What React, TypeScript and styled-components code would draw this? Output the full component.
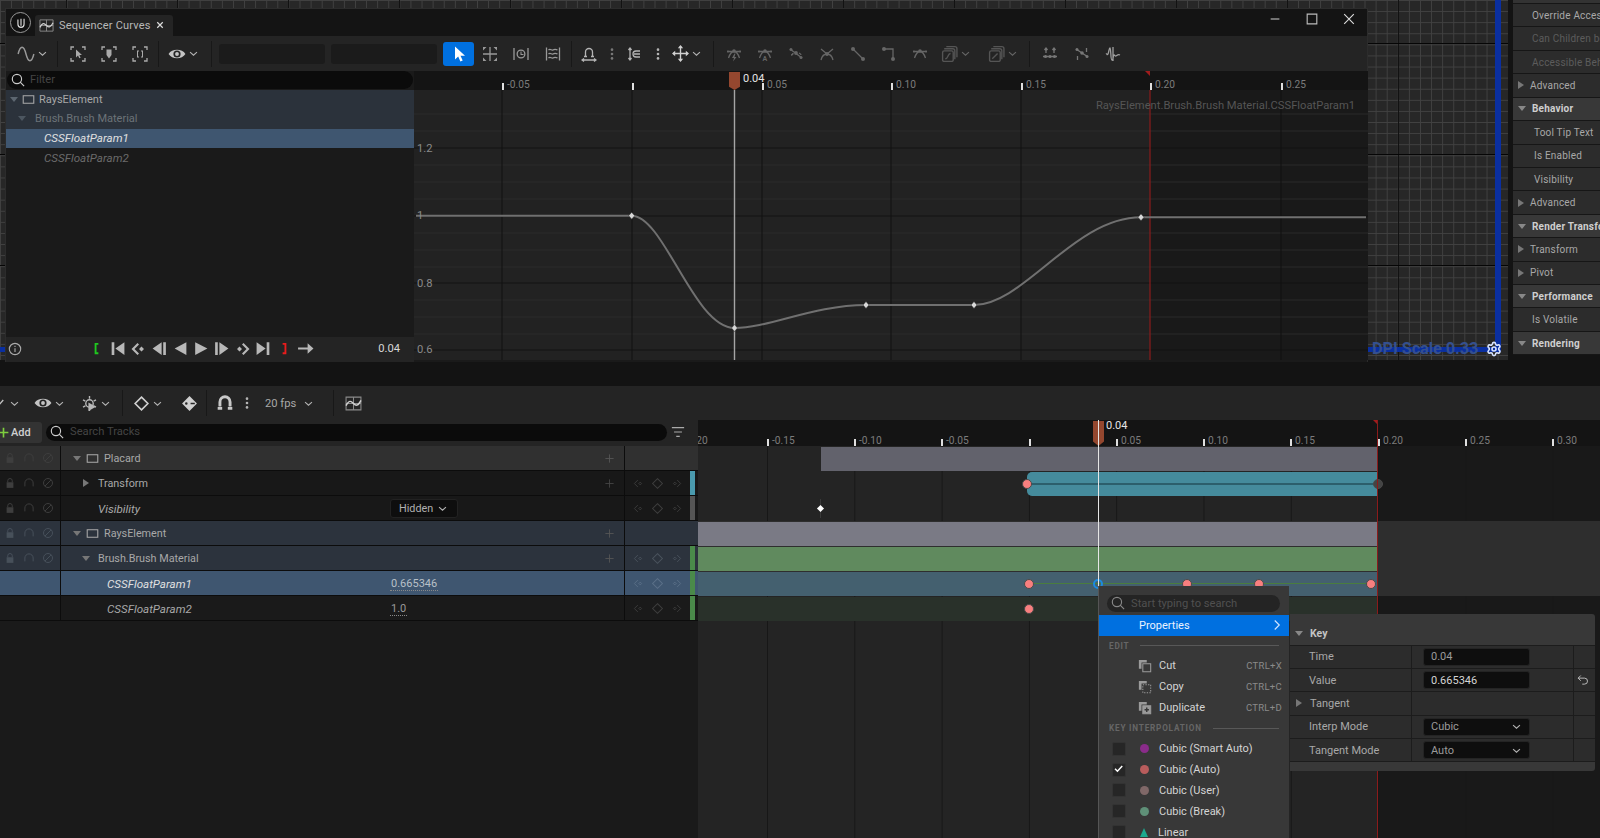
import React from "react";
import styled, { createGlobalStyle } from "styled-components";
import { Settings } from "lucide-react";

const GlobalStyle = createGlobalStyle`
  html, body { margin: 0; padding: 0; background: #131313; overflow: hidden; }
  * { box-sizing: border-box; }
  body { font-family: Roboto, "Liberation Sans", sans-serif; }
`;

const Page = styled.div`
  position: relative;
  width: 1600px;
  height: 838px;
  overflow: hidden;
  background: #131313;
  color: #c0c0c0;
  font-size: 10.8px;
`;

/* ---------- icons ---------- */

const Svg = styled.svg<{ $s: number; $c: string; $sw?: number }>`
  width: ${(p) => p.$s}px;
  height: ${(p) => p.$s}px;
  color: ${(p) => p.$c};
  flex: none;
  display: block;
  fill: none;
  stroke: currentColor;
  stroke-width: ${(p) => p.$sw ?? 1.3};
`;

const GlyphLetter = styled.text`
  font-family: Roboto, sans-serif;
  font-size: 7px;
  font-weight: 700;
  fill: currentColor;
  stroke: none;
`;

type IcProps = { d?: string; fill?: string; s?: number; c?: string; sw?: number; dots?: number[][]; letter?: string };

function Ic({ d = "", fill, s = 16, c = "#b4b4b4", sw, dots, letter }: IcProps) {
  return (
    <Svg viewBox="0 0 16 16" $s={s} $c={c} $sw={sw}>
      {d && <path d={d} />}
      {fill && <path d={fill} fill="currentColor" stroke="none" fillRule="evenodd" />}
      {dots && dots.map((o, i) => <circle key={i} cx={o[0]} cy={o[1]} r={o[2] ?? 1.5} fill="currentColor" stroke="none" />)}
      {letter && <GlyphLetter x={5.4} y={15}>{letter}</GlyphLetter>}
    </Svg>
  );
}

const P = {
  chevron: "M3 6l5 4.5L13 6",
  wave: "M1 8C3 0 6 0 8 8s5 8 7 0",
  corners: "M1 4V1h3M12 1h3v3M15 12v3h-3M4 15H1v-3",
  cursorSmall: "M6 3.5v8l2-2 1.3 2.8 1.3-.6L9.4 9H12z",
  shield: "M5.5 3.5h5V9L8 12.5 5.5 9z",
  bracket: "M5 4.5h2v1H6v5h1v1H5zM9 4.5h2v7H9v-1h1v-5H9z",
  eye: "M.5 8C3.5 3 12.5 3 15.5 8 12.5 13 3.5 13 .5 8zM8 4.8a3.2 3.2 0 1 0 0 6.4 3.2 3.2 0 0 0 0-6.4zM8 6.3a1.7 1.7 0 1 1 0 3.4 1.7 1.7 0 0 1 0-3.4z",
  cursor: "M4 .5v13l3.2-3 2.2 5 2.3-1-2.2-4.8H14z",
  transformCorners: "M1 1h3.5L1 4.5zM15 1v3.5L11.5 1zM1 15v-3.5L4.5 15zM15 15h-3.5L15 11.5z",
  clock: "M1 2v12M15 2v12",
  clockFace: "M8 3.5a4.5 4.5 0 1 0 0 9 4.5 4.5 0 0 0 0-9zM8 4.8a3.2 3.2 0 1 1 0 6.4 3.2 3.2 0 0 1 0-6.4zM7.5 5.5h1V8h2v1h-3z",
  waveBox: "M1.5 1.5v13M14.5 1.5v13M3.5 4c2-2 3 1 4.5 0s2.5-1 4.5 0M3.5 8c2-2 3 1 4.5 0s2.5-1 4.5 0M3.5 12c2-2 3 1 4.5 0s2.5-1 4.5 0",
  arch: "M4.5 10.5V6a3.5 3.5 0 0 1 7 0v4.5M3 10.5h3M10 10.5h3M1 14h14M3 12.5L1 14l2 1.500M13 12.5l2 1.5-2 1.5",
  snap: "M3 2.5v11M1.5 4L3 2l1.5 2M1.5 12L3 14l1.5-2M13 5H9a3 3 0 0 0 0 6h4M7 8h6",
  move: "M8 1v14M1 8h14",
  moveHeads: "M8 0l2.5 3h-5zM8 16l2.5-3h-5zM0 8l3-2.5v5zM16 8l-3-2.5v5z",
  tanArc: "M1 5.5h14M2.5 12C4 7.5 6 5.5 8 5.5s4 2 5.5 6.5",
  bolt: "M8.5 7.5L6 12h2l-1 3.5L10.5 11h-2l1-3.5z",
  tanB: "M2 3l12 9M3 9c2 0 2-2 2-2M11 7c2 1 2 2 2 2",
  tanX: "M2 3l6 5 6-5M2 14c1-4 3-6 6-6s5 2 6 6",
  tanLin: "M3 3l10 10",
  tanStep: "M3 3h9v10",
  stack: "M5 1.5h8a2 2 0 0 1 2 2v8M3 3.5h8a2 2 0 0 1 2 2v8M3 5.5h7A1.5 1.5 0 0 1 11.5 7v7a1.5 1.5 0 0 1-1.5 1.5H3A1.5 1.5 0 0 1 1.5 14V7A1.5 1.5 0 0 1 3 5.5zM4 13c3 0 2-5 5-5",
  stackB: "M5 1.5h8a2 2 0 0 1 2 2v8M3 3.5h8a2 2 0 0 1 2 2v8M3 5.5h7A1.5 1.5 0 0 1 11.5 7v7a1.5 1.5 0 0 1-1.5 1.5H3A1.5 1.5 0 0 1 1.5 14V7A1.5 1.5 0 0 1 3 5.5zM4 13l5-5",
  normal: "M1 10.5h14M4 2v5M12 2v5M2.5 4L4 2l1.5 2M10.5 4L12 2l1.5 2",
  scat: "M2 3l12 8M12.5 2v4M3.5 10v4",
  pulse: "M1 8c1-1 1 2 2 0s1-6 2-6 .5 12 2 12 1-5 2-5 1 1.5 2 1 2-2 4-1M8 1v14",
  search: "M6.8 1.5a5.3 5.3 0 1 0 0 10.6 5.3 5.3 0 0 0 0-10.6zM10.8 10.8L15 15",
  box: "M1.5 3.5h13v9h-13z",
  close: "M2.5 2.5l11 11M13.5 2.5l-11 11",
  lock: "M5 7V5a3 3 0 0 1 6 0v2",
  lockBody: "M3.5 7h9v7.5h-9z",
  phones: "M2.5 12.5V8a5.5 5.5 0 0 1 11 0v4.5",
  ban: "M8 2a6 6 0 1 0 0 12A6 6 0 0 0 8 2zM3.8 12.2l8.4-8.4",
  plus: "M8 2v12M2 8h12",
  funnel: "M1 3h14M3.5 8h9M6 13h4",
  curveBox: "M1 2h14v12H1zM1 8h14M8 2v12",
  curveInBox: "M1 10c3-6 5-4 7-2s4 3 7-3",
  undo: "M5 2L1.5 5.5 5 9M1.5 5.5H10a4 4 0 0 1 0 8H7",
  keyLeftFill: "M7.5 2L9 3.5 4.5 8 9 12.5 7.5 14l-6-6zM11.5 5.5L14 8l-2.5 2.5L9 8z",
  keyRightFill: "M8.5 2L7 3.5 11.5 8 7 12.5 8.5 14l6-6zM4.5 5.5L7 8l-2.5 2.5L2 8z",
  navLeft: "M7 3L2 8l5 5M10.5 6L12.5 8l-2 2-2-2z",
  navRight: "M9 3l5 5-5 5M5.5 6L7.5 8l-2 2-2-2z",
  info: "M8 1.5a6.5 6.5 0 1 0 0 13 6.5 6.5 0 0 0 0-13zM8 7v4.5M8 4.3v1.5",
  gear: "M8 4.5a3.5 3.5 0 1 0 0 7 3.5 3.5 0 0 0 0-7zM8 1v2.5M8 12.5V15M1.9 4.5l2.2 1.3M11.9 10.2l2.2 1.3M1.9 11.5l2.2-1.3M11.9 5.8l2.2-1.3",
  check: "M1.5 7l3.5 3.5L12 3",
};

const Chev = ({ c = "#b4b4b4" }: { c?: string }) => <Ic d={P.chevron} s={11} c={c} sw={1.6} />;
const Dots = ({ c = "#b4b4b4" }: { c?: string }) => <Ic s={14} dots={[[8, 3], [8, 8], [8, 13]]} c={c} />;

/* ---------- top area: viewport grid behind the floating window ---------- */

const TopArea = styled.div`
  position: relative;
  display: flex;
  height: 362px;
  background-color: #272727;
  background-image:
    linear-gradient(to bottom, #050505 1.5px, transparent 1.5px),
    linear-gradient(to right, #121212 1.5px, transparent 1.5px),
    linear-gradient(to bottom, #414141 1px, transparent 1px),
    linear-gradient(to right, #414141 1px, transparent 1px);
  background-size: 100% 111px, 111px 100%, 100% 11.1px, 11.1px 100%;
  background-position: 0 43px, 66px 0, 0 0, 0 0;
`;

const BlueH = styled.div`
  position: absolute;
  left: 0;
  top: 347px;
  width: 1501px;
  height: 5px;
  background: #0a2fa0;
`;

const BlueV = styled.div`
  position: absolute;
  left: 1495px;
  top: 0;
  width: 6px;
  height: 352px;
  background: #0a2fa0;
`;

const ViewportFoot = styled.div`
  position: absolute;
  left: 0;
  right: 0;
  top: 360px;
  height: 2px;
  background: #131313;
`;

const Window = styled.div`
  position: relative;
  z-index: 1;
  margin: 8px 0 0 5px;
  width: 1363px;
  height: 354px;
  display: flex;
  flex-direction: column;
  background: #1a1a1a;
  border: 1px solid #2c2c2c;
  border-bottom: none;
`;

const TitleBar = styled.div`
  height: 27px;
  flex: none;
  display: flex;
  align-items: flex-end;
  background: #141414;
  padding-left: 4px;
`;

const Logo = styled.div`
  width: 21px;
  height: 21px;
  margin: 0 4px 3px 0;
  border-radius: 50%;
  border: 1.5px solid #9a9a9a;
  background: #111;
  display: flex;
  align-items: center;
  justify-content: center;
`;

const Tab = styled.div`
  width: 138px;
  height: 21px;
  background: #242424;
  border-radius: 3px 3px 0 0;
  display: flex;
  align-items: center;
  gap: 5px;
  padding: 0 0 1px 4px;
  color: #b8b8b8;
  font-size: 11px;
  letter-spacing: 0.2px;
`;

const WindowControls = styled.div`
  margin-left: auto;
  align-self: flex-start;
  margin-top: 3px;
  display: flex;
  align-items: center;
  gap: 23px;
  padding-right: 11px;
`;

const Toolbar = styled.div`
  height: 35px;
  flex: none;
  display: flex;
  align-items: center;
  background: #242424;
`;

const Slot = styled.div<{ $w?: number; $ml?: number }>`
  width: ${(p) => p.$w ?? 30}px;
  margin-left: ${(p) => p.$ml ?? 0}px;
  height: 24px;
  flex: none;
  display: flex;
  align-items: center;
  justify-content: center;
  gap: 2px;
`;

const Sep = styled.div<{ $w?: number }>`
  width: ${(p) => p.$w ?? 7}px;
  flex: none;
  height: 26px;
  display: flex;
  justify-content: center;
  &::after {
    content: "";
    width: 1px;
    background: #181818;
  }
`;

const BlankField = styled.div<{ $ml?: number }>`
  width: 106px;
  height: 20px;
  flex: none;
  margin-left: ${(p) => p.$ml ?? 0}px;
  background: #1b1b1b;
  border-radius: 3px;
`;

const BlueButton = styled.div`
  width: 31px;
  height: 24px;
  flex: none;
  margin-left: 6px;
  background: #0070e0;
  border-radius: 3px;
  display: flex;
  align-items: center;
  justify-content: center;
`;

const WindowBody = styled.div`
  flex: 1;
  display: grid;
  grid-template-columns: 408px 1fr;
  min-height: 0;
`;

const Outliner = styled.div`
  display: flex;
  flex-direction: column;
  background: #1a1a1a;
`;

const PillSearch = styled.div<{ $h: number; $bg?: string; $c?: string; $gap?: number }>`
  height: ${(p) => p.$h}px;
  background: ${(p) => p.$bg ?? "#0b0b0b"};
  border-radius: ${(p) => p.$h / 2}px;
  display: flex;
  align-items: center;
  gap: ${(p) => p.$gap ?? 5}px;
  padding: 0 0 1px 4px;
  color: ${(p) => p.$c ?? "#444"};
  font-size: 11.2px;
`;

const FilterWrap = styled.div`
  height: 18.5px;
  flex: none;
  padding: 0 1px;
`;

const TreeRow = styled.div<{ $bg: string; $c: string; $pad: number; $italic?: boolean }>`
  height: 19.6px;
  flex: none;
  background: ${(p) => p.$bg};
  color: ${(p) => p.$c};
  padding-left: ${(p) => p.$pad}px;
  display: flex;
  align-items: center;
  gap: 4px;
  font-style: ${(p) => (p.$italic ? "italic" : "normal")};
  font-size: ${(p) => (p.$italic ? 11.6 : 11)}px;
`;

const TreeText = styled.span<{ $ml: number }>`
  margin-left: ${(p) => p.$ml}px;
`;

const Caret = styled.span<{ $open?: boolean; $c?: string }>`
  width: 0;
  height: 0;
  flex: none;
  ${(p) =>
    p.$open
      ? `border-left: 4.5px solid transparent; border-right: 4.5px solid transparent; border-top: 5px solid ${p.$c ?? "#777"};`
      : `border-top: 4.5px solid transparent; border-bottom: 4.5px solid transparent; border-left: 6px solid ${p.$c ?? "#777"};`}
`;

const Transport = styled.div`
  margin-top: auto;
  height: 25px;
  flex: none;
  background: #242424;
  display: flex;
  align-items: center;
  padding-bottom: 2px;
`;

const TransportSlot = styled.div<{ $first?: boolean }>`
  width: 20.9px;
  flex: none;
  margin-left: ${(p) => (p.$first ? 62 : 0)}px;
  display: flex;
  justify-content: center;
`;

const TimeText = styled.span`
  margin-left: auto;
  padding-right: 14px;
  color: #d8d8d8;
  font-size: 11.2px;
`;

/* ---------- curve chart ---------- */

const CurvePane = styled.div`
  display: flex;
  flex-direction: column;
  position: relative;
`;

const Ruler = styled.div<{ $h: number }>`
  position: relative;
  height: ${(p) => p.$h}px;
  flex: none;
  background: #141414;
  overflow: hidden;
`;

const Tick = styled.div<{ $x: number }>`
  position: absolute;
  left: ${(p) => p.$x}px;
  bottom: 0;
  width: 1.5px;
  height: 7px;
  background: #e0e0e0;
`;

const TickLabel = styled.span`
  position: absolute;
  left: 5px;
  bottom: -1px;
  color: #7c7c7c;
  font-size: 10.2px;
  white-space: nowrap;
  line-height: 12px;
`;

const PlayMarker = styled.div<{ $x: number; $top: number; $h: number; $w: number }>`
  position: absolute;
  left: ${(p) => p.$x}px;
  top: ${(p) => p.$top}px;
  width: ${(p) => p.$w}px;
  height: ${(p) => p.$h}px;
  background: #94472f;
  clip-path: polygon(0 0, 100% 0, 100% 82%, 50% 100%, 0 82%);
`;

const PlayLabel = styled.span<{ $x: number; $top: number }>`
  position: absolute;
  left: ${(p) => p.$x}px;
  top: ${(p) => p.$top}px;
  color: #e4e4e4;
  font-size: 11px;
  line-height: 13px;
`;

const RangeFlag = styled.div<{ $x: number }>`
  position: absolute;
  left: ${(p) => p.$x}px;
  top: 0;
  width: 5px;
  height: 5px;
  background: #a01c1c;
  clip-path: polygon(0 0, 100% 0, 100% 100%);
`;

const Chart = styled.div`
  position: relative;
  height: 270px;
  flex: none;
  background: #222;
`;

const ChartSvg = styled.svg`
  display: block;
  width: 954px;
  height: 270px;
`;

const AxisLabel = styled.span<{ $y: number }>`
  position: absolute;
  left: 3px;
  top: ${(p) => p.$y - 7}px;
  color: #8a8a8a;
  font-size: 11.2px;
  line-height: 14px;
`;

const ChannelName = styled.span`
  position: absolute;
  right: 13px;
  top: 9px;
  color: #555;
  font-size: 11.2px;
  line-height: 14px;
`;

/* ---------- viewport and details on the right ---------- */

const Viewport = styled.div`
  position: relative;
  width: 140px;
  flex: none;
  z-index: 2;
`;

const DpiLabel = styled.span`
  position: absolute;
  left: 4px;
  top: 339px;
  color: #34508f;
  font-size: 16.2px;
  font-weight: 700;
  line-height: 20px;
  white-space: nowrap;
`;

const GearSpot = styled.div`
  position: absolute;
  left: 118px;
  top: 341px;
  color: #d8e4ff;
`;

const Gutter = styled.div`
  width: 5px;
  flex: none;
  background: #131313;
  position: relative;
  z-index: 2;
`;

const Details = styled.div`
  width: 87px;
  flex: none;
  background: #131313;
  position: relative;
  z-index: 2;
  overflow: hidden;
`;

const DetailTop = styled.div`
  height: 4px;
  background: #333;
  border-bottom: 1px solid #161616;
`;

const DetailRow = styled.div<{ $kind: "head" | "fold" | "item" | "dim" }>`
  height: 23.43px;
  display: flex;
  align-items: center;
  gap: 6px;
  white-space: nowrap;
  font-size: 10px;
  letter-spacing: 0.2px;
  border-bottom: 1px solid #161616;
  padding-left: ${(p) => (p.$kind === "item" ? 21 : p.$kind === "dim" ? 19 : 5)}px;
  background: ${(p) => (p.$kind === "head" ? "#383838" : "#2c2c2c")};
  color: ${(p) => (p.$kind === "head" ? "#cfcfcf" : p.$kind === "dim" ? "#5c5c5c" : "#a8a8a8")};
  font-weight: ${(p) => (p.$kind === "head" ? 700 : 400)};
`;

const DetailIndent = styled.span`
  width: 8px;
  flex: none;
`;

/* ---------- sequencer ---------- */

const Sequencer = styled.div`
  margin-top: 24px;
  display: flex;
  flex-direction: column;
`;

const SeqToolbar = styled.div`
  height: 34px;
  display: flex;
  align-items: center;
  background: #242424;
`;

const FpsText = styled.span`
  width: 32px;
  margin-left: 10px;
  color: #a8a8a8;
  font-size: 11.2px;
  white-space: nowrap;
`;

const SeqBody = styled.div`
  display: grid;
  grid-template-columns: 698px 1fr;
`;

const TrackColumn = styled.div`
  background: #1a1a1a;
  height: 418px;
`;

const SearchRow = styled.div`
  height: 26px;
  background: #242424;
  display: flex;
  align-items: center;
  padding: 0 13px 2px 0;
`;

const AddButton = styled.div`
  width: 42px;
  height: 21px;
  flex: none;
  background: #333;
  border-radius: 0 3px 3px 0;
  display: flex;
  align-items: center;
  gap: 0;
  color: #d0d0d0;
  font-size: 11px;
  font-weight: 500;
  overflow: hidden;
`;

const AddPlus = styled.span`
  margin-left: -3px;
  margin-right: 1px;
`;

const SearchWrap = styled.div`
  flex: 1;
  margin: 0 4px;
`;

const TrackRow = styled.div<{ $bg: string }>`
  height: 25px;
  display: grid;
  grid-template-columns: 61px 329px 235px 65px 5px 3px;
  border-bottom: 1px solid #0c0c0c;
  background: ${(p) => p.$bg};
`;

const LockCell = styled.div`
  display: flex;
  align-items: center;
  gap: 7px;
  padding-left: 4px;
  border-right: 1px solid #0c0c0c;
`;

const NameCell = styled.div<{ $pad: number; $italic?: boolean; $c?: string }>`
  display: flex;
  align-items: center;
  gap: 5px;
  padding: ${(p) => (p.$italic ? "1px" : "0")} 0 0 ${(p) => p.$pad}px;
  font-style: ${(p) => (p.$italic ? "italic" : "normal")};
  color: ${(p) => p.$c ?? "#a8a8a8"};
  font-size: ${(p) => (p.$italic ? 11.6 : 10.8)}px;
`;

const ValueCell = styled.div`
  display: flex;
  align-items: center;
  justify-content: space-between;
  padding-right: 9px;
  border-right: 1px solid #0c0c0c;
`;

const PlusHolder = styled.div`
  margin-left: auto;
`;

const UnderValue = styled.span<{ $c: string }>`
  color: ${(p) => p.$c};
  font-size: 11px;
  border-bottom: 1px dotted #888;
  line-height: 13px;
  padding: 0 1px;
  margin-top: 2px;
`;

const HiddenDrop = styled.div`
  width: 68px;
  height: 19px;
  background: #0e0e0e;
  border: 1px solid #222;
  border-radius: 3px;
  display: flex;
  align-items: center;
  gap: 4px;
  padding-left: 8px;
  color: #b0b0b0;
  font-size: 10.8px;
`;

const KeyCell = styled.div`
  display: flex;
  align-items: center;
  padding-left: 4px;
`;

const KeySlot = styled.div`
  width: 19px;
  flex: none;
  display: flex;
  justify-content: center;
`;

const Strip = styled.div<{ $c?: string }>`
  background: ${(p) => p.$c ?? "transparent"};
`;

const Timeline = styled.div`
  position: relative;
  overflow: hidden;
  height: 418px;
`;

const Lanes = styled.div`
  height: 392px;
  background-image:
    linear-gradient(to right, #171717 1px, transparent 1px),
    linear-gradient(to right, #242424 679px, #191919 679px);
  background-size: 87.3px 100%, 100% 100%;
  background-position: 69px 0, 0 0;
`;

const Lane = styled.div<{ $bg?: string }>`
  position: relative;
  height: 25px;
  background: ${(p) => p.$bg ?? "transparent"};
`;

const Bar = styled.div<{ $x: number; $w: number; $c: string; $round?: boolean }>`
  position: absolute;
  left: ${(p) => p.$x}px;
  width: ${(p) => p.$w}px;
  top: 0.5px;
  height: 24px;
  background: ${(p) => p.$c};
  border-radius: ${(p) => (p.$round ? "5px 0 0 5px" : 0)};
`;

const BarLine = styled.div`
  position: absolute;
  left: 0;
  right: 0;
  top: 11px;
  height: 2px;
  background: #2c5f6c;
`;

const KeyLine = styled.div`
  position: absolute;
  left: 331px;
  width: 342px;
  top: 12px;
  height: 1px;
  background: #4a7d3e;
`;

const KeyDot = styled.div<{ $x: number; $c?: string; $ring?: boolean }>`
  position: absolute;
  left: ${(p) => p.$x - 5}px;
  top: 7.5px;
  width: 10px;
  height: 10px;
  border-radius: 50%;
  background: ${(p) => (p.$ring ? "transparent" : p.$c ?? "#f87f7f")};
  border: ${(p) => (p.$ring ? "2px solid #1b8be0" : "1.5px solid #4a4a4a")};
`;

const Diamond = styled.div<{ $x: number }>`
  position: absolute;
  left: ${(p) => p.$x - 2.5}px;
  top: 9.5px;
  width: 5px;
  height: 5px;
  background: #fff;
  transform: rotate(45deg);
`;

const DiamondStem = styled.div<{ $x: number }>`
  position: absolute;
  left: ${(p) => p.$x}px;
  top: 3px;
  width: 1px;
  height: 19px;
  background: #3a3a3a;
`;

const RangeLine = styled.div`
  position: absolute;
  left: 679px;
  top: 0;
  bottom: 0;
  width: 1px;
  background: #8b1b1b;
`;

const PlayLine = styled.div`
  position: absolute;
  left: 400px;
  top: 0;
  bottom: 0;
  width: 1px;
  background: #e6e6e6;
`;

/* ---------- context menu and key properties ---------- */

const Menu = styled.div`
  position: absolute;
  left: 1098px;
  top: 586px;
  width: 191px;
  height: 260px;
  background: #383838;
  border-left: 1px solid #555;
  z-index: 5;
  color: #d4d4d4;
  font-size: 11px;
`;

const MenuSearch = styled.div`
  padding: 9px 9px 2.5px 8px;
`;

const MenuHot = styled.div`
  height: 21px;
  background: #0070e0;
  color: #e8f2ff;
  display: flex;
  align-items: center;
  justify-content: space-between;
  padding: 0 6px 0 40px;
  font-size: 11px;
`;

const MenuHead = styled.div`
  height: 20px;
  display: flex;
  align-items: center;
  gap: 11px;
  padding: 0 10px;
  color: #666;
  font-size: 8.2px;
  font-weight: 700;
  letter-spacing: 0.8px;
  white-space: nowrap;
  &::after {
    content: "";
    flex: 1;
    height: 1px;
    background: #585858;
  }
`;

const MenuRow = styled.div`
  height: 20.9px;
  display: flex;
  align-items: center;
  padding: 0 7px 0 39px;
`;

const MenuIconSlot = styled.div`
  width: 21px;
  flex: none;
`;

const Shortcut = styled.span`
  margin-left: auto;
  color: #8a8a8a;
  font-size: 9.5px;
  letter-spacing: 0.3px;
`;

const CheckBox = styled.div`
  width: 14px;
  height: 14px;
  margin: 0 14px 0 -26px;
  flex: none;
  background: #262626;
  border: 1px solid #333;
  border-radius: 2px;
  display: flex;
  align-items: center;
  justify-content: center;
`;

const Swatch = styled.span<{ $c: string }>`
  width: 9px;
  height: 9px;
  margin-right: 10px;
  flex: none;
  border-radius: 50%;
  background: ${(p) => p.$c};
`;

const TriSwatch = styled.span`
  width: 0;
  height: 0;
  margin-right: 10px;
  flex: none;
  border-left: 4.5px solid transparent;
  border-right: 4.5px solid transparent;
  border-bottom: 9px solid #1ca88e;
`;

const KeyPanel = styled.div`
  position: absolute;
  left: 1290px;
  top: 614px;
  width: 305px;
  height: 157px;
  background: #383838;
  border-radius: 0 3px 3px 0;
  z-index: 4;
  padding-top: 8px;
  color: #a8a8a8;
  font-size: 11px;
`;

const KeyHead = styled.div`
  height: 23.5px;
  display: flex;
  align-items: center;
  gap: 7px;
  padding-left: 5px;
  color: #c4c4c4;
  font-size: 10.5px;
  font-weight: 700;
  border-bottom: 1px solid #1c1c1c;
`;

const PropRow = styled.div`
  height: 23.4px;
  display: grid;
  grid-template-columns: 122px 162px 1fr;
  background: #2c2c2c;
  border-bottom: 1px solid #1c1c1c;
`;

const PropName = styled.div`
  display: flex;
  align-items: center;
  gap: 8px;
  padding-left: 19px;
  border-right: 1px solid #1c1c1c;
`;

const PropTangent = styled(PropName)`
  padding-left: 6px;
`;

const PropValue = styled.div`
  display: flex;
  align-items: center;
  padding-left: 11px;
  border-right: 1px solid #1c1c1c;
`;

const PropInput = styled.div<{ $c?: string }>`
  width: 107px;
  height: 18px;
  background: #0e0e0e;
  border: 1px solid #242424;
  border-radius: 3px;
  display: flex;
  align-items: center;
  justify-content: space-between;
  padding: 0 7px;
  color: ${(p) => p.$c ?? "#9a9a9a"};
`;

const ResetCell = styled.div`
  display: flex;
  align-items: center;
  justify-content: center;
  padding-right: 3px;
`;

/* ---------- data ---------- */

const curveTicks: [number, string][] = [
  [88, "-0.05"], [218, ""], [348, "0.05"], [477, "0.10"], [607, "0.15"], [736, "0.20"], [867, "0.25"],
];

const seqTicks: [number, string][] = [
  [-18, "-0.20"], [69, "-0.15"], [156, "-0.10"], [243, "-0.05"], [331, ""], [418, "0.05"],
  [505, "0.10"], [592, "0.15"], [680, "0.20"], [767, "0.25"], [854, "0.30"],
];

const detailRows: [string, "head" | "fold" | "item" | "dim"][] = [
  ["Override Access", "fold"], ["Can Children be", "dim"], ["Accessible Behav", "dim"], ["Advanced", "fold"],
  ["Behavior", "head"], ["Tool Tip Text", "item"], ["Is Enabled", "item"], ["Visibility", "item"], ["Advanced", "fold"],
  ["Render Transform", "head"], ["Transform", "fold"], ["Pivot", "fold"], ["Performance", "head"], ["Is Volatile", "fold"], ["Rendering", "head"],
];

const KeyHandle = ({ x, y }: { x: number; y: number }) => (
  <path d={`M${x} ${y - 3.5}L${x + 3} ${y}L${x} ${y + 3.5}L${x - 3} ${y}Z`} fill="#d8d8d8" stroke="#222" strokeWidth={0.5} />
);

const Lock = ({ c = "#3e3e3e" }: { c?: string }) => (
  <>
    <Ic d={P.lock} fill={P.lockBody} s={12} c={c} />
    <Ic d={P.phones} s={12} c={c} />
    <Ic d={P.ban} s={12} c={c} />
  </>
);

const KeyNav = ({ c = "#3e3e3e" }: { c?: string }) => (
  <KeyCell>
    <KeySlot><Ic d={P.navLeft} s={11} c={c} /></KeySlot>
    <KeySlot><Ic d="M8 2l6 6-6 6-6-6z" s={13} c={c} /></KeySlot>
    <KeySlot><Ic d={P.navRight} s={11} c={c} /></KeySlot>
  </KeyCell>
);

const Tr = ({ d }: { d: string }) => <Ic fill={d} s={17} c="#b8b8b8" />;

const DoubleSquare = ({ dash, plus }: { dash?: boolean; plus?: boolean }) => (
  <Svg viewBox="0 0 16 16" $s={14} $c="#9a9a9a" $sw={1.2}>
    <path d="M1 1h9v3H4v7H1z" fill="currentColor" stroke="none" />
    <path
      d="M5.5 5.5h9v9h-9z"
      strokeDasharray={dash ? "1.5 1.5" : undefined}
      fill={plus ? "currentColor" : "none"}
    />
    {plus && <path d="M10 7.5v5M7.5 10h5" stroke="#383838" strokeWidth={1.6} />}
  </Svg>
);

export default function App() {
  return (
    <Page>
      <GlobalStyle />
      <TopArea>
        <BlueH />
        <BlueV />
        <ViewportFoot />
        <Window>
          <TitleBar>
            <Logo>
              <Ic d="M4.5 4v5.5a3.5 3.5 0 0 0 7 0V3M8 3v8" s={14} c="#ddd" />
            </Logo>
            <Tab>
              <Svg viewBox="0 0 16 16" $s={15} $c="#8a8a8a" $sw={1}>
                <path d={P.curveBox} />
                <path d={P.curveInBox} stroke="#d0d0d0" strokeWidth={1.3} />
              </Svg>
              Sequencer Curves
              <Ic d={P.close} s={8} c="#ddd" sw={2.4} />
            </Tab>
            <WindowControls>
              <Ic d="M3 8h10" s={14} c="#bbb" />
              <Ic d="M2.5 2.5h11v11h-11z" s={14} c="#bbb" />
              <Ic d={P.close} s={14} c="#ddd" />
            </WindowControls>
          </TitleBar>
          <Toolbar>
            <Slot $w={40} $ml={6}><Ic d={P.wave} s={18} c="#999" /><Chev /></Slot>
            <Sep $w={11} />
            <Slot><Ic d={P.corners} fill={P.cursorSmall} c="#aaa" /></Slot>
            <Slot $ml={1}><Ic d={P.corners} fill={P.shield} c="#aaa" /></Slot>
            <Slot $ml={1}><Ic d={P.corners} fill={P.bracket} c="#aaa" /></Slot>
            <Sep />
            <Slot $w={42}><Ic fill={P.eye} s={18} c="#c4c4c4" /><Chev /></Slot>
            <Sep $w={15} />
            <BlankField />
            <BlankField $ml={6} />
            <BlueButton><Ic fill={P.cursor} c="#fff" /></BlueButton>
            <Slot $ml={1}><Ic d={P.move} fill={P.transformCorners} c="#999" /></Slot>
            <Slot $ml={1}><Ic d={P.clock} fill={P.clockFace} c="#999" /></Slot>
            <Slot $ml={2}><Ic d={P.waveBox} c="#999" /></Slot>
            <Sep $w={6} />
            <Slot><Ic d={P.arch} c="#b4b4b4" /></Slot>
            <Slot $w={16}><Dots c="#777" /></Slot>
            <Slot><Ic d={P.snap} c="#b4b4b4" /></Slot>
            <Slot $w={16}><Dots /></Slot>
            <Slot $w={42}><Ic d={P.move} fill={P.moveHeads} s={17} c="#d0d0d0" /><Chev /></Slot>
            <Sep $w={11} />
            <Slot><Ic d={P.tanArc} fill={P.bolt} dots={[[8, 5, 1.8], [2, 5.5, 1], [14, 5.5, 1]]} c="#666" /></Slot>
            <Slot $ml={1}><Ic d={P.tanArc} letter="A" dots={[[8, 5, 1.8], [2, 5.5, 1], [14, 5.5, 1]]} c="#666" /></Slot>
            <Slot $ml={1}><Ic d={P.tanB} dots={[[3, 3.5], [8, 7, 1.9], [13, 11.5]]} c="#666" /></Slot>
            <Slot $ml={1}><Ic d={P.tanX} dots={[[8, 8, 2]]} c="#666" /></Slot>
            <Slot $ml={1}><Ic d={P.tanLin} dots={[[3, 3, 2], [13, 13, 2]]} c="#666" /></Slot>
            <Slot $ml={1}><Ic d={P.tanStep} dots={[[3, 3, 2], [12, 13, 2]]} c="#666" /></Slot>
            <Slot $ml={1}><Ic d={P.tanArc} dots={[[8, 5, 1.8], [2, 5.5, 1], [14, 5.5, 1]]} c="#666" /></Slot>
            <Slot $w={42}><Ic d={P.stack} s={17} c="#555" /><Chev c="#666" /></Slot>
            <Slot $w={42} $ml={5}><Ic d={P.stackB} s={17} c="#555" /><Chev c="#666" /></Slot>
            <Sep $w={11} />
            <Slot><Ic d={P.normal} dots={[[3.5, 10.5, 1.5], [8, 10.5, 1.5], [12.5, 10.5, 1.5]]} c="#777" /></Slot>
            <Slot $ml={2}><Ic d={P.scat} dots={[[3, 3.5, 1.5], [8, 7, 1.8], [13, 10.5, 1.5]]} c="#777" /></Slot>
            <Slot $ml={1}><Ic d={P.pulse} c="#a0a0a0" /></Slot>
          </Toolbar>
          <WindowBody>
            <Outliner>
              <FilterWrap>
                <PillSearch $h={18}>
                  <Ic d={P.search} s={14} c="#ccc" />
                  Filter
                </PillSearch>
              </FilterWrap>
              <TreeRow $bg="#2b323b" $c="#a8a8a8" $pad={4}>
                <Caret $open $c="#5c6670" />
                <Ic d={P.box} s={13} c="#aaa" />
                RaysElement
              </TreeRow>
              <TreeRow $bg="#2b323b" $c="#6c7278" $pad={12}>
                <Caret $open $c="#4c5660" />
                <TreeText $ml={5}>Brush.Brush Material</TreeText>
              </TreeRow>
              <TreeRow $bg="#3f5670" $c="#e0e0e0" $pad={38} $italic>CSSFloatParam1</TreeRow>
              <TreeRow $bg="#1a1a1a" $c="#6a6a6a" $pad={38} $italic>CSSFloatParam2</TreeRow>
              <Transport>
                <Slot $w={18}><Ic d={P.info} s={14} c="#aaa" /></Slot>
                <TransportSlot $first><Ic fill="M6 2h4v2H8v8h2v2H6z" s={15} c="#1fc81f" /></TransportSlot>
                <TransportSlot><Tr d="M2.5 2H5v12H2.5zM14.5 2v12L6 8z" /></TransportSlot>
                <TransportSlot><Ic fill={P.keyLeftFill} s={16} c="#b8b8b8" /></TransportSlot>
                <TransportSlot><Tr d="M11.5 2H14v12h-2.5zM10 2v12L1.5 8z" /></TransportSlot>
                <TransportSlot><Tr d="M13.5 2v12L2.5 8z" /></TransportSlot>
                <TransportSlot><Tr d="M3 2v12l11.5-6z" /></TransportSlot>
                <TransportSlot><Tr d="M2 2h2.5v12H2zM6 2v12l8.5-6z" /></TransportSlot>
                <TransportSlot><Ic fill={P.keyRightFill} s={16} c="#b8b8b8" /></TransportSlot>
                <TransportSlot><Tr d="M11 2h2.5v12H11zM1.5 2v12L10 8z" /></TransportSlot>
                <TransportSlot><Ic fill="M6 2h4v12H6v-2h2V4H6z" s={15} c="#e81c1c" /></TransportSlot>
                <TransportSlot><Tr d="M1 7h9V3l5.5 5L10 13V9H1z" /></TransportSlot>
                <TimeText>0.04</TimeText>
              </Transport>
            </Outliner>
            <CurvePane>
              <Ruler $h={19}>
                {curveTicks.map(([x, t]) => (
                  <Tick key={x} $x={x}>{t && <TickLabel>{t}</TickLabel>}</Tick>
                ))}
                <PlayMarker $x={315} $top={1} $w={11} $h={18} />
                <PlayLabel $x={329} $top={1}>0.04</PlayLabel>
                <RangeFlag $x={731} />
              </Ruler>
              <Chart>
                <ChartSvg viewBox="0 0 954 270">
                  <rect x={736} y={0} width={218} height={270} fill="#191919" />
                  {[24, 41, 75, 92, 109, 143, 160, 177, 210, 227, 244].map((y) => (
                    <line key={y} x1={0} x2={954} y1={y} y2={y} stroke="#2a2a2a" strokeWidth={1} />
                  ))}
                  {[58, 126, 193, 260].map((y) => (
                    <line key={y} x1={0} x2={954} y1={y} y2={y} stroke="#131313" strokeWidth={1.2} />
                  ))}
                  {[88, 218, 348, 477, 607, 867].map((x) => (
                    <line key={x} x1={x} x2={x} y1={0} y2={270} stroke="#111" strokeWidth={1} />
                  ))}
                  <line x1={736} x2={736} y1={0} y2={270} stroke="#8b1b1b" strokeWidth={1.2} />
                  <line x1={320.5} x2={320.5} y1={0} y2={270} stroke="#a5a5a5" strokeWidth={1.4} />
                  <path
                    d="M2 125.7L217.7 125.7C250 125.7 280 238 320.5 238C355 238 400 215 452 215L560 215C610 215 660 127.3 727 127.3L952 127.3"
                    fill="none"
                    stroke="#707070"
                    strokeWidth={2}
                  />
                  <KeyHandle x={217.7} y={125.7} />
                  <KeyHandle x={320.5} y={238} />
                  <KeyHandle x={452} y={215} />
                  <KeyHandle x={560} y={215} />
                  <KeyHandle x={727} y={127.3} />
                </ChartSvg>
                <AxisLabel $y={59}>1.2</AxisLabel>
                <AxisLabel $y={126}>1</AxisLabel>
                <AxisLabel $y={194}>0.8</AxisLabel>
                <AxisLabel $y={260}>0.6</AxisLabel>
                <ChannelName>RaysElement.Brush.Brush Material.CSSFloatParam1</ChannelName>
              </Chart>
            </CurvePane>
          </WindowBody>
        </Window>
        <Viewport>
          <DpiLabel>DPI Scale 0.33</DpiLabel>
          <GearSpot><Settings size={16} strokeWidth={2.4} /></GearSpot>
        </Viewport>
        <Gutter />
        <Details>
          <DetailTop />
          {detailRows.map(([t, k], i) => (
            <DetailRow key={i} $kind={k}>
              {k === "head" && <Caret $open $c="#888" />}
              {k === "fold" && (t === "Advanced" || t === "Transform" || t === "Pivot") && <Caret $c="#777" />}
              {k === "fold" && (t === "Override Access" || t === "Is Volatile") && <DetailIndent />}
              {t}
            </DetailRow>
          ))}
        </Details>
      </TopArea>

      <Sequencer>
        <SeqToolbar>
          <Slot $w={22} $ml={-4}><Ic d="M1 9l3 3 7-8" s={12} c="#c0c0c0" sw={1.8} /><Chev /></Slot>
          <Slot $w={38} $ml={12}><Ic fill={P.eye} s={18} c="#c4c4c4" /><Chev /></Slot>
          <Slot $w={38} $ml={9}><Ic d={P.gear} fill="M7 7v8l7-4z" s={17} c="#b8b8b8" /><Chev /></Slot>
          <Sep $w={14} />
          <Slot $w={38}><Ic d="M8 2l6 6-6 6-6-6z" s={17} c="#d0d0d0" sw={1.5} /><Chev /></Slot>
          <Slot $w={26} $ml={9}><Ic fill="M8 1l7 7-7 7-7-7zM5 6.8a1.2 1.2 0 1 0 0 2.4 1.2 1.2 0 0 0 0-2.4zM9 7.3h4v1.4H9z" s={17} c="#d0d0d0" /></Slot>
          <Sep $w={9} />
          <Slot $w={28}><Ic d="M3.5 11V7a4.5 4.5 0 0 1 9 0v4" fill="M1.5 11.5h4V14h-4zM10.5 11.5h4V14h-4z" s={18} c="#c8c8c8" sw={2.6} /></Slot>
          <Slot $w={16}><Dots /></Slot>
          <FpsText>20 fps</FpsText>
          <Slot $w={16} $ml={3}><Chev /></Slot>
          <Sep $w={35} />
          <Slot $w={20} $ml={-8}>
            <Svg viewBox="0 0 16 16" $s={17} $c="#8a8a8a" $sw={1}>
              <path d={P.curveBox} />
              <path d={P.curveInBox} stroke="#d0d0d0" strokeWidth={1.4} />
            </Svg>
          </Slot>
        </SeqToolbar>
        <SeqBody>
          <TrackColumn>
            <SearchRow>
              <AddButton>
                <AddPlus><Ic d={P.plus} s={13} c="#7ecf3e" sw={2} /></AddPlus>
                Add
              </AddButton>
              <SearchWrap>
                <PillSearch $h={17} $gap={6}>
                  <Ic d={P.search} s={14} c="#ccc" />
                  Search Tracks
                </PillSearch>
              </SearchWrap>
              <Ic d={P.funnel} s={14} c="#aaa" />
            </SearchRow>

            <TrackRow $bg="#303030">
              <LockCell><Lock /></LockCell>
              <NameCell $pad={12}><Caret $open /><Ic d={P.box} s={13} c="#aaa" />Placard</NameCell>
              <ValueCell><PlusHolder><Ic d={P.plus} s={11} c="#555" /></PlusHolder></ValueCell>
              <div />
              <Strip />
            </TrackRow>
            <TrackRow $bg="#181818">
              <LockCell><Lock /></LockCell>
              <NameCell $pad={22}><Caret /><TreeText $ml={4}>Transform</TreeText></NameCell>
              <ValueCell><PlusHolder><Ic d={P.plus} s={11} c="#444" /></PlusHolder></ValueCell>
              <KeyNav />
              <Strip $c="#4a9aae" />
            </TrackRow>
            <TrackRow $bg="#181818">
              <LockCell><Lock /></LockCell>
              <NameCell $pad={37} $italic>Visibility</NameCell>
              <ValueCell><HiddenDrop>Hidden<Chev /></HiddenDrop></ValueCell>
              <KeyNav />
              <Strip $c="#555" />
            </TrackRow>
            <TrackRow $bg="#2c333d">
              <LockCell><Lock c="#47505a" /></LockCell>
              <NameCell $pad={12}><Caret $open /><Ic d={P.box} s={13} c="#aaa" />RaysElement</NameCell>
              <ValueCell><PlusHolder><Ic d={P.plus} s={11} c="#555" /></PlusHolder></ValueCell>
              <div />
              <Strip />
            </TrackRow>
            <TrackRow $bg="#2c333d">
              <LockCell><Lock c="#47505a" /></LockCell>
              <NameCell $pad={21}><Caret $open /><TreeText $ml={3}>Brush.Brush Material</TreeText></NameCell>
              <ValueCell><PlusHolder><Ic d={P.plus} s={11} c="#555" /></PlusHolder></ValueCell>
              <KeyNav c="#4a535d" />
              <Strip $c="#4a8a4a" />
            </TrackRow>
            <TrackRow $bg="#3f5670">
              <LockCell />
              <NameCell $pad={46} $italic $c="#e0e0e0">CSSFloatParam1</NameCell>
              <ValueCell><UnderValue $c="#b8c0c8">0.665346</UnderValue></ValueCell>
              <KeyNav c="#5b7088" />
              <Strip $c="#4a8a4a" />
            </TrackRow>
            <TrackRow $bg="#1a1a1a">
              <LockCell />
              <NameCell $pad={46} $italic $c="#a8a8a8">CSSFloatParam2</NameCell>
              <ValueCell><UnderValue $c="#999">1.0</UnderValue></ValueCell>
              <KeyNav />
              <Strip $c="#4a8a4a" />
            </TrackRow>
          </TrackColumn>

          <Timeline>
            <Ruler $h={26}>
              {seqTicks.map(([x, t]) => (
                <Tick key={x} $x={x}>{t && <TickLabel>{t}</TickLabel>}</Tick>
              ))}
              <PlayMarker $x={395} $top={1} $w={11} $h={25} />
              <PlayLabel $x={408} $top={-1}>0.04</PlayLabel>
              <RangeFlag $x={675} />
            </Ruler>
            <Lanes>
              <Lane><Bar $x={123} $w={556} $c="#62626c" /></Lane>
              <Lane>
                <Bar $x={329} $w={350} $c="#458b9c" $round><BarLine /></Bar>
                <KeyDot $x={329} />
                <KeyDot $x={680} $c="#444" />
              </Lane>
              <Lane><DiamondStem $x={122} /><Diamond $x={122} /></Lane>
              <Lane $bg="#2e2e2e"><Bar $x={0} $w={679} $c="#7a7a85" /></Lane>
              <Lane $bg="#2e2e2e"><Bar $x={0} $w={679} $c="#608a5e" /></Lane>
              <Lane $bg="#2e2e2e">
                <Bar $x={0} $w={679} $c="#44606f" />
                <KeyLine />
                <KeyDot $x={331} />
                <KeyDot $x={400} $ring />
                <KeyDot $x={489} />
                <KeyDot $x={561} />
                <KeyDot $x={673} />
              </Lane>
              <Lane>
                <Bar $x={0} $w={679} $c="#29312a" />
                <KeyDot $x={331} />
              </Lane>
            </Lanes>
            <RangeLine />
            <PlayLine />
          </Timeline>
        </SeqBody>
      </Sequencer>

      <Menu>
        <MenuSearch>
          <PillSearch $h={17} $bg="#242424" $c="#505050" $gap={6}>
            <Ic d={P.search} s={14} c="#888" />
            Start typing to search
          </PillSearch>
        </MenuSearch>
        <MenuHot>
          Properties
          <Ic d="M5 2l6 6-6 6" s={12} c="#cfe3ff" sw={1.6} />
        </MenuHot>
        <MenuHead>EDIT</MenuHead>
        <MenuRow><MenuIconSlot><DoubleSquare /></MenuIconSlot>Cut<Shortcut>CTRL+X</Shortcut></MenuRow>
        <MenuRow><MenuIconSlot><DoubleSquare dash /></MenuIconSlot>Copy<Shortcut>CTRL+C</Shortcut></MenuRow>
        <MenuRow><MenuIconSlot><DoubleSquare plus /></MenuIconSlot>Duplicate<Shortcut>CTRL+D</Shortcut></MenuRow>
        <MenuHead>KEY INTERPOLATION</MenuHead>
        <MenuRow><CheckBox /><Swatch $c="#8a2c8a" />Cubic (Smart Auto)</MenuRow>
        <MenuRow><CheckBox><Ic d={P.check} s={11} c="#fff" sw={2.2} /></CheckBox><Swatch $c="#b85c5c" />Cubic (Auto)</MenuRow>
        <MenuRow><CheckBox /><Swatch $c="#806868" />Cubic (User)</MenuRow>
        <MenuRow><CheckBox /><Swatch $c="#5f9078" />Cubic (Break)</MenuRow>
        <MenuRow><CheckBox /><TriSwatch />Linear</MenuRow>
      </Menu>

      <KeyPanel>
        <KeyHead><Caret $open $c="#888" />Key</KeyHead>
        <PropRow>
          <PropName>Time</PropName>
          <PropValue><PropInput>0.04</PropInput></PropValue>
          <div />
        </PropRow>
        <PropRow>
          <PropName>Value</PropName>
          <PropValue><PropInput $c="#d4d4d4">0.665346</PropInput></PropValue>
          <ResetCell><Ic d={P.undo} s={12} c="#bbb" /></ResetCell>
        </PropRow>
        <PropRow>
          <PropTangent><Caret $c="#777" />Tangent</PropTangent>
          <PropValue />
          <div />
        </PropRow>
        <PropRow>
          <PropName>Interp Mode</PropName>
          <PropValue><PropInput>Cubic<Chev /></PropInput></PropValue>
          <div />
        </PropRow>
        <PropRow>
          <PropName>Tangent Mode</PropName>
          <PropValue><PropInput>Auto<Chev /></PropInput></PropValue>
          <div />
        </PropRow>
      </KeyPanel>
    </Page>
  );
}
